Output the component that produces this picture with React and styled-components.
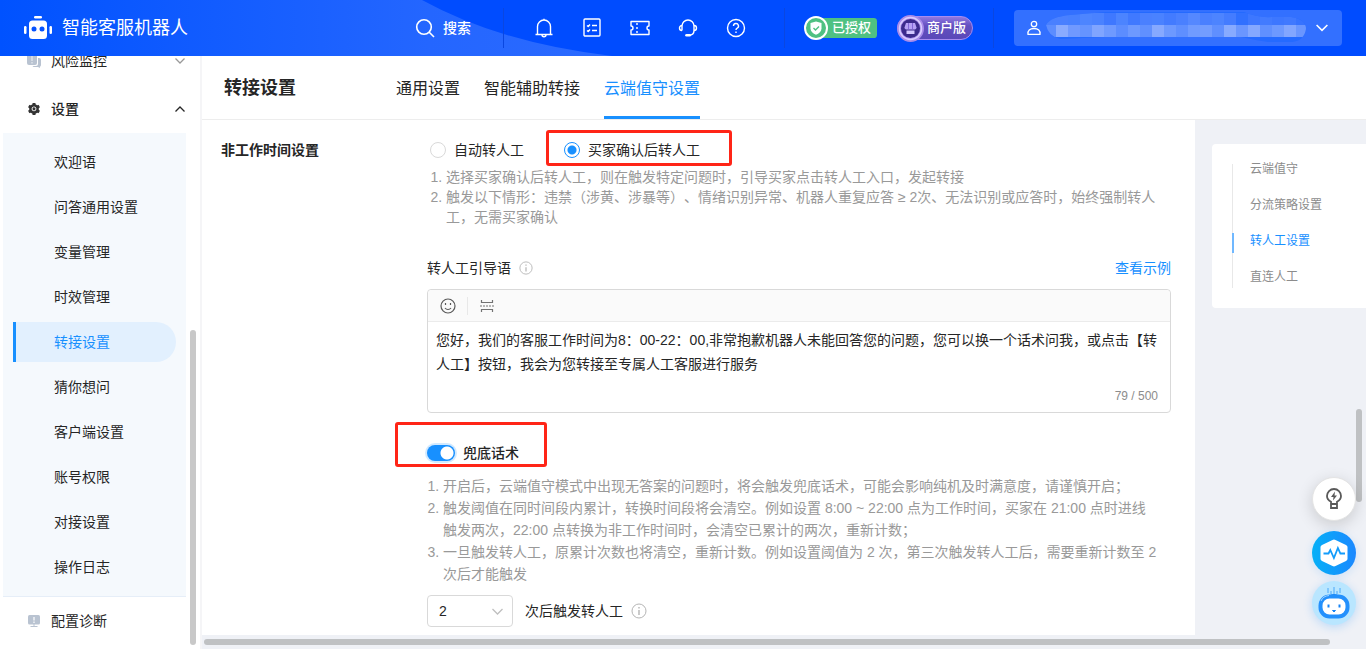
import React, { useState } from 'react';
import styled, { createGlobalStyle, css } from 'styled-components';
import { AiFillSetting } from 'react-icons/ai';

const GlobalStyle = createGlobalStyle`
  * { box-sizing: border-box; }
  body {
    margin: 0;
    font-family: "Liberation Sans", "Noto Sans CJK SC", sans-serif;
    font-size: 14px;
    line-height: 20px;
    color: #262626;
    text-spacing-trim: space-all;
  }
  button, input, select, textarea { font: inherit; color: inherit; }
`;

const Page = styled.div`
  display: flex;
  flex-direction: column;
  height: 100vh;
  overflow: hidden;
  background: #fff;
`;

/* ---------- header ---------- */

const Header = styled.header`
  position: relative;
  flex: none;
  display: flex;
  align-items: center;
  height: 56px;
  padding: 0 24px;
  background: #004cff;
  color: #fff;
`;

const HeaderWave = styled.svg`
  position: absolute;
  left: 0;
  top: 0;
  width: 620px;
  height: 56px;
`;

const Brand = styled.a`
  position: relative;
  flex: none;
  display: flex;
  align-items: center;
  gap: 10px;
  width: 391px;
  color: #fff;
  font-size: 18px;
  text-decoration: none;
`;

const SearchButton = styled.button`
  position: relative;
  flex: none;
  display: flex;
  align-items: center;
  gap: 8px;
  width: 88px;
  height: 40px;
  padding: 0;
  border: 0;
  background: none;
  font-weight: 500;
`;

const HeaderGroup = styled.div`
  position: relative;
  flex: none;
  display: flex;
  align-items: center;
  gap: ${(p) => p.$gap}px;
  height: 40px;
  padding: ${(p) => p.$pad};
  border-left: 1px solid #0a47e0;
`;

const IconButton = styled.button`
  display: grid;
  place-items: center;
  width: 24px;
  height: 24px;
  padding: 0;
  border: 0;
  background: none;
`;

const AuthBadge = styled.span`
  flex: none;
  display: flex;
  align-items: center;
  height: 20px;
  width: 72px;
  gap: 4px;
  border-radius: 12px 4px 4px 12px;
  background: #4fc182;
  font-weight: 500;
  font-size: 13px;
  white-space: nowrap;
`;

const PlanBadge = styled(AuthBadge)`
  width: 76px;
  height: 24px;
  gap: 3px;
  border: 1px solid #a78cf0;
  border-radius: 12px;
  background: linear-gradient(#8f78e0, #6450c0 40%, #5a48b8);
`;

const BadgeIcon = styled.svg`
  flex: none;
  margin-left: -1px;
`;

const UserMenu = styled.button`
  position: relative;
  display: flex;
  align-items: center;
  justify-content: space-between;
  width: 328px;
  height: 36px;
  margin-left: auto;
  padding: 0 14px 0 12px;
  border: 0;
  border-radius: 4px;
  background: #3370ff;
`;

const UserName = styled.span`
  display: flex;
  align-items: center;
  gap: 4px;
`;

/* ---------- sidebar ---------- */

const Body = styled.div`
  flex: 1;
  display: flex;
  min-height: 0;
`;

const Sidebar = styled.nav`
  position: relative;
  flex: none;
  display: flex;
  flex-direction: column;
  justify-content: flex-end;
  width: 200px;
  padding: 0 14px 4px 3px;
  overflow: hidden;
`;

const GroupButton = styled.button`
  flex: none;
  display: flex;
  align-items: center;
  gap: 10px;
  height: 48px;
  padding: 0 1px 0 24px;
  border: 0;
  background: none;
  font-weight: ${(p) => (p.$open ? 500 : 400)};
  text-align: left;
`;

const GroupName = styled.span`
  flex: 1;
`;

const SubMenu = styled.div`
  flex: none;
  display: flex;
  flex-direction: column;
  gap: 5px;
  padding: 9px 10px;
  border-bottom: 1px solid #e6eef8;
  background: #f5f9fd;
`;

const SubLink = styled.a`
  display: block;
  padding: 0 0 0 38px;
  border-left: 3px solid transparent;
  border-radius: 0 20px 20px 0;
  line-height: 40px;
  color: #262626;
  text-decoration: none;
  ${(p) =>
    p.$active &&
    css`
      border-left-color: #1890ff;
      background: #e2f0fe;
      color: #1890ff;
    `}
`;

const ScrollThumb = styled.span`
  position: absolute;
  border-radius: 3px;
  background: #bfc1c3;
`;

const SidebarThumb = styled(ScrollThumb)`
  right: 4px;
  bottom: 4px;
  width: 6px;
  height: 315px;
  background: #c8c8c8;
`;

/* ---------- main ---------- */

const Main = styled.main`
  position: relative;
  flex: 1;
  display: flex;
  flex-direction: column;
  min-width: 0;
  border-left: 2px solid #f5f5f7;
`;

const TitleBar = styled.div`
  flex: none;
  display: flex;
  height: 64px;
  padding-left: 22px;
  border-bottom: 1px solid #ededed;
`;

const Title = styled.h1`
  width: 172px;
  margin: 0;
  font-size: 18px;
  line-height: 64px;
`;

const Tabs = styled.div`
  display: flex;
  gap: 24px;
`;

const Tab = styled.button`
  padding: 6px 0 0;
  border: 0;
  border-bottom: 3px solid ${(p) => (p.$active ? '#1890ff' : 'transparent')};
  background: none;
  color: ${(p) => (p.$active ? '#1890ff' : '#262626')};
  font-size: 16px;
  line-height: 54px;
`;

const Content = styled.div`
  flex: 1;
  display: flex;
  min-height: 0;
  padding-bottom: 14px;
  background: #eff1f6;
`;

const Panel = styled.section`
  flex: 1;
  display: flex;
  min-width: 0;
  padding: 20px 24px 8px 19px;
  background: #fff;
`;

const SectionTitle = styled.h2`
  flex: none;
  width: 206px;
  margin: 0;
  font-size: 14px;
  line-height: 20px;
`;

const Form = styled.div`
  flex: 1;
  min-width: 0;
`;

const RadioRow = styled.div`
  display: flex;
  gap: 40px;
  padding-left: 3px;
`;

const RadioLabel = styled.label`
  position: relative;
  display: flex;
  align-items: center;
  gap: 8px;
`;

const Radio = styled.input`
  appearance: none;
  width: 16px;
  height: 16px;
  margin: 0;
  border: 1px solid #d9d9d9;
  border-radius: 50%;
  &:checked {
    border-color: #1890ff;
    background: radial-gradient(circle, #1890ff 4px, #fff 5px);
  }
`;

const Highlight = styled.span`
  position: absolute;
  inset: ${(p) => p.$inset};
  border: 3px solid #ff2517;
  border-radius: 3px;
  pointer-events: none;
`;

const Notes = styled.ol`
  margin: ${(p) => (p.$loose ? '12px 0 10px' : '7px 0 31px')};
  padding: ${(p) => (p.$loose ? '0 13px 0 16px' : '0 13px 0 19px')};
  line-height: ${(p) => (p.$loose ? 22 : 20)}px;
  color: #999;
`;

const FieldHead = styled.div`
  display: flex;
  align-items: center;
  gap: 8px;
  margin-bottom: 11px;
`;

const ExampleLink = styled.a`
  margin-left: auto;
  color: #1890ff;
  text-decoration: none;
`;

const Editor = styled.div`
  border: 1px solid #d9d9d9;
  border-radius: 4px;
`;

const EditorTools = styled.div`
  display: flex;
  align-items: center;
  height: 32px;
  padding: 0 8px;
  gap: 7px;
  border-bottom: 1px solid #ebebeb;
  border-radius: 4px 4px 0 0;
  background: #fafafa;
`;

const ToolDivider = styled.span`
  width: 1px;
  height: 18px;
  background: #e8e8e8;
`;

const EditorText = styled.textarea`
  display: block;
  width: 100%;
  height: 60px;
  padding: 6px 8px 0;
  border: 0;
  outline: 0;
  resize: none;
  overflow: hidden;
  background: none;
  line-height: 24px;
`;

const Counter = styled.div`
  padding: 4px 12px 6px;
  color: #8c8c8c;
  font-size: 12px;
  text-align: right;
`;

const SwitchRow = styled.label`
  position: relative;
  display: flex;
  align-items: center;
  gap: 8px;
  width: fit-content;
  margin-top: 30px;
  font-weight: 500;
`;

const Switch = styled.input`
  appearance: none;
  width: 28px;
  height: 16px;
  margin: 0;
  border-radius: 8px;
  background: radial-gradient(circle at 20px 8px, #fff 6px, transparent 7px) #1890ff;
  box-shadow: 0 0 0 2px #d1e9ff;
  &:not(:checked) {
    background: radial-gradient(circle at 8px 8px, #fff 6px, transparent 7px) #bfbfbf;
    box-shadow: none;
  }
`;

const ThresholdRow = styled.div`
  display: flex;
  align-items: center;
  gap: 8px;
`;

const SelectBox = styled.span`
  position: relative;
  width: 86px;
  margin-right: 4px;
`;

const Select = styled.select`
  appearance: none;
  display: block;
  width: 100%;
  height: 32px;
  padding: 0 11px;
  border: 1px solid #d9d9d9;
  border-radius: 4px;
  background: #fff;
`;

const SelectArrow = styled.svg`
  position: absolute;
  right: 10px;
  top: 11px;
  pointer-events: none;
`;

const Aside = styled.aside`
  flex: none;
  width: 171px;
  padding: 24px 0 0 17px;
`;

const Anchors = styled.nav`
  padding: 17px 20px 19px;
  border-radius: 4px 0 0 4px;
  background: #fff;
`;

const AnchorList = styled.div`
  display: flex;
  flex-direction: column;
  gap: 16px;
  background: linear-gradient(#e8e8e8, #e8e8e8) 0 3px / 1px calc(100% - 4px) no-repeat;
`;

const AnchorLink = styled.a`
  height: 20px;
  padding-left: 16px;
  border-left: 2px solid ${(p) => (p.$active ? '#70b8ff' : 'transparent')};
  color: ${(p) => (p.$active ? '#1890ff' : '#8c8c8c')};
  font-size: 12px;
  line-height: 16px;
  text-decoration: none;
`;

const HorizontalThumb = styled(ScrollThumb)`
  left: 2px;
  right: 36px;
  bottom: 4px;
  height: 6px;
`;

const VerticalThumb = styled(ScrollThumb)`
  right: 4px;
  bottom: 147px;
  width: 6px;
  height: 93px;
`;

const FloatBar = styled.div`
  position: absolute;
  right: 10px;
  bottom: 24px;
  display: flex;
  flex-direction: column;
  gap: 6px;
`;

const FloatButton = styled.button`
  display: grid;
  place-items: center;
  width: 44px;
  height: 44px;
  padding: 0;
  border: ${(p) => (p.$bordered ? '1px solid #e4e4e4' : '0')};
  border-radius: 50%;
  background: ${(p) => p.$fill};
  box-shadow: ${(p) => p.$shadow};
  margin-bottom: ${(p) => (p.$bordered ? 4 : 0)}px;
`;

/* ---------- icons ---------- */

const Chevron = ({ up, color, size = 10 }) => (
  <svg width={size} height={size} viewBox="0 0 10 10" fill="none" stroke={color} strokeWidth="1.3">
    <path d={up ? 'M.5 7.5 5 3l4.500 4.500' : 'M.5 2.500 5 7l4.500-4.500'} />
  </svg>
);

const InfoIcon = ({ size = 14 }) => (
  <svg width={size} height={size} viewBox="0 0 16 16" fill="none" stroke="#b5b5b5">
    <circle cx="8" cy="8" r="7" />
    <path d="M8 7v5M8 4v1.500" strokeWidth="1.400" />
  </svg>
);

const LogoIcon = () => (
  <svg width="28" height="24" viewBox="0 0 28 24" fill="#fff">
    <rect x="10" y="0" width="8" height="2.500" rx="1.200" />
    <rect x="5" y="4.500" width="18" height="18.500" rx="3.500" />
    <rect x="0" y="10" width="2.500" height="8" rx="1.200" />
    <rect x="25.500" y="10" width="2.500" height="8" rx="1.200" />
    <circle cx="10" cy="13" r="2.500" fill="#0552ff" />
    <circle cx="18" cy="13" r="2.500" fill="#0552ff" />
  </svg>
);

const lineIcon = {
  width: 20,
  height: 20,
  viewBox: '0 0 20 20',
  fill: 'none',
  stroke: '#fff',
  strokeWidth: 1.4,
  strokeLinejoin: 'round',
};

const BellIcon = () => (
  <svg {...lineIcon}>
    <path d="M1.500 16.500h17M3.500 16.500V8.500a6.500 6.500 0 0 1 13 0v8M10 2V.8M8 16.800a2 2 0 0 0 4 0" />
  </svg>
);
const TaskIcon = () => (
  <svg {...lineIcon}>
    <rect x="2" y="1" width="16" height="17" rx="1" />
    <path d="m5 7.500 1.200 1L8 6.500M10 7.500h5M5 12.500l1.200 1L8 11.500M10 12.500h5" />
  </svg>
);
const TicketIcon = () => (
  <svg {...lineIcon}>
    <path d="M1 3.500h18v4.500a2 2 0 0 0 0 4v4.500H1V12a2 2 0 0 0 0-4z" />
    <path d="M7 5v11" strokeDasharray="2 2" />
  </svg>
);
const HeadsetIcon = () => (
  <svg {...lineIcon}>
    <path d="M4 12.500V8a6 6 0 0 1 12 0v4.500c0 3-1.500 4.700-5 4.700" />
    <path d="M4 7.500a2.500 2.500 0 0 0 0 5M16 7.500a2.500 2.500 0 0 1 0 5" />
    <path d="M8.500 17.200h3.200" strokeWidth="2.600" strokeLinecap="round" />
  </svg>
);
const HelpIcon = () => (
  <svg {...lineIcon}>
    <circle cx="10" cy="10" r="8.500" />
    <path d="M7.500 8a2.500 2.500 0 1 1 3.700 2.200c-.8.400-1.200.9-1.200 1.900M10 13.500V15" />
  </svg>
);

const RiskIcon = () => (
  <svg width="14" height="14" viewBox="0 0 14 14" fill="#b9c3d1">
    <rect x="0" y="0" width="10" height="11" rx="2" />
    <path d="M11 4h1a2 2 0 0 1 2 2v5a2 2 0 0 1-1 1.700V14l-2-1H7a2 2 0 0 1-1.500-1H9a2 2 0 0 0 2-2z" />
    <path d="M5 2v5M5 8v1.500" stroke="#eef1f5" />
  </svg>
);
const DiagnoseIcon = () => (
  <svg width="14" height="14" viewBox="0 0 14 14">
    <rect x="1" y="1" width="12" height="9.500" rx="1.500" fill="#b9c3d1" />
    <path d="M7 10v2.500M3.500 12.500h7" stroke="#b9c3d1" />
    <path d="M7 3v3.500M7 7.500V9" stroke="#fff" strokeWidth="1.200" />
  </svg>
);

/* ---------- data ---------- */

const SETTINGS = ['欢迎语', '问答通用设置', '变量管理', '时效管理', '转接设置', '猜你想问', '客户端设置', '账号权限', '对接设置', '操作日志'];
const TABS = ['通用设置', '智能辅助转接', '云端值守设置'];
const ANCHORS = ['云端值守', '分流策略设置', '转人工设置', '直连人工'];
const QUICK_ICONS = [
  ['通知', BellIcon],
  ['任务', TaskIcon],
  ['卡券', TicketIcon],
  ['客服', HeadsetIcon],
  ['帮助', HelpIcon],
];
const MASK_TOP = ['#4a80ff', '#4a80ff', '#4780ff', '#4d85ff', '#4a82ff', '#3f78ff', '#4c84ff', '#4079ff', '#4a80ff', '#4a82ff', '#437bff', '#4a80ff', '#5588ff', '#4a80ff', '#4d84ff', '#447cff', '#3070ff', '#3d77ff', '#427bff', '#3d77ff', '#4079ff', '#3773ff'];
const MASK_BOTTOM = ['#5c8dff', '#8aabff', '#7099ff', '#6594ff', '#80a5ff', '#6f9aff', '#5c8dff', '#6d99ff', '#6090ff', '#86a9ff', '#6d99ff', '#5f8fff', '#709bff', '#739dff', '#5f8fff', '#87aaff', '#6a96ff', '#84a8ff', '#6090ff', '#6d99ff', '#82a6ff', '#6a96ff'];

const GUIDE =
  '您好，我们的客服工作时间为8：00-22：00,非常抱歉机器人未能回答您的问题，您可以换一个话术问我，或点击【转人工】按钮，我会为您转接至专属人工客服进行服务';

export default function App() {
  const [mode, setMode] = useState('confirm');
  const [fallback, setFallback] = useState(true);
  const [guide, setGuide] = useState(GUIDE);
  const [tab, setTab] = useState(TABS[2]);

  return (
    <Page>
      <GlobalStyle />
      <Header>
        <HeaderWave viewBox="0 0 620 56" aria-hidden="true">
          <defs>
            <linearGradient id="wave">
              <stop offset="0" stopColor="#0052ff" />
              <stop offset=".7" stopColor="#2466ff" />
              <stop offset="1" stopColor="#2b6aff" />
            </linearGradient>
          </defs>
          <path d="M0 0h422q78 43 190 56H0z" fill="url(#wave)" />
        </HeaderWave>
        <Brand href="#home">
          <LogoIcon />
          智能客服机器人
        </Brand>
        <SearchButton type="button">
          <svg width="20" height="20" viewBox="0 0 20 20" fill="none" stroke="#fff" strokeWidth="1.600">
            <circle cx="9" cy="9" r="7.300" />
            <path d="m14 14 5 5" />
          </svg>
          搜索
        </SearchButton>
        <HeaderGroup $gap={24} $pad="0 36px 0 28px">
          {QUICK_ICONS.map(([name, Icon]) => (
            <IconButton key={name} type="button" aria-label={name}>
              <Icon />
            </IconButton>
          ))}
        </HeaderGroup>
        <HeaderGroup $gap={20} $pad="0 20px">
          <AuthBadge>
            <BadgeIcon width="24" height="24" viewBox="0 0 24 24">
              <circle cx="12" cy="12" r="11" fill="#4fc182" stroke="#fff" strokeWidth="2" />
              <path d="M12 5.500 17.500 7v5.500c0 3-2.500 5-5.500 6.300-3-1.300-5.500-3.300-5.500-6.300V7z" fill="#fff" />
              <path d="m9.500 12 2 2 3.500-3.500" fill="none" stroke="#4fc182" strokeWidth="1.400" />
            </BadgeIcon>
            已授权
          </AuthBadge>
          <PlanBadge>
            <BadgeIcon width="27" height="27" viewBox="0 0 27 27">
              <circle cx="13.500" cy="13.500" r="11.500" fill="#3c2a8c" stroke="#a88cea" strokeWidth="4" />
              <circle cx="13.500" cy="13.500" r="11" fill="none" stroke="#d9ccff" strokeWidth="1.500" />
              <path d="M9 8h9l1.500 4.500a2 2 0 0 1-1.500 2H9a2 2 0 0 1-1.500-2z" fill="#b6a0f5" />
              <path d="M9.500 15.500h8v3.500h-8z" fill="#d3c6ff" />
              <path d="M11.500 8v6M15.500 8v6" stroke="#8468d8" />
            </BadgeIcon>
            商户版
          </PlanBadge>
        </HeaderGroup>
        <HeaderGroup $gap={0} $pad="0" />
        <UserMenu type="button" aria-label="账号">
          <UserName>
            <svg width="16" height="16" viewBox="0 0 16 16" fill="none" stroke="#fff" strokeWidth="1.300">
              <circle cx="8" cy="4" r="2.700" />
              <path d="M2 14.300c-.5-3.600 1.800-5.800 6-5.800s6.500 2.200 6 5.800z" />
            </svg>
            <svg width="260" height="32" viewBox="0 0 260 32" aria-hidden="true">
              <defs>
                <clipPath id="brush">
                  <path d="M0 13Q4 5 24 3L60 0H198Q212 6 226 5H245Q260 7 260 17 258 29 246 30H222Q208 28 195 25H60L14 27Q2 24 0 13z" />
                </clipPath>
              </defs>
              <g clipPath="url(#brush)">
                <rect width="260" height="32" fill="#246aff" />
                {MASK_TOP.map((c, i) => (
                  <rect key={i} x={i * 12 - 2} y="1" width="12" height="12" fill={c} />
                ))}
                {MASK_BOTTOM.map((c, i) => (
                  <rect key={i} x={i * 12 - 2} y="13" width="12" height="12" fill={c} />
                ))}
              </g>
            </svg>
          </UserName>
          <Chevron color="#fff" size={12} />
        </UserMenu>
      </Header>

      <Body>
        <Sidebar>
          <GroupButton type="button">
            <RiskIcon />
            <GroupName>风险监控</GroupName>
            <Chevron color="#999" />
          </GroupButton>
          <GroupButton type="button" $open>
            <AiFillSetting size={14} color="#333" />
            <GroupName>设置</GroupName>
            <Chevron color="#262626" up />
          </GroupButton>
          <SubMenu>
            {SETTINGS.map((name) => (
              <SubLink key={name} href="#settings" $active={name === '转接设置'}>
                {name}
              </SubLink>
            ))}
          </SubMenu>
          <GroupButton type="button">
            <DiagnoseIcon />
            <GroupName>配置诊断</GroupName>
          </GroupButton>
          <SidebarThumb />
        </Sidebar>

        <Main>
          <TitleBar>
            <Title>转接设置</Title>
            <Tabs role="tablist">
              {TABS.map((name) => (
                <Tab key={name} type="button" role="tab" aria-selected={tab === name} $active={tab === name} onClick={() => setTab(name)}>
                  {name}
                </Tab>
              ))}
            </Tabs>
          </TitleBar>
          <Content>
            <Panel>
              <SectionTitle>非工作时间设置</SectionTitle>
              <Form>
                <RadioRow>
                  <RadioLabel>
                    <Radio type="radio" name="mode" checked={mode === 'auto'} onChange={() => setMode('auto')} />
                    自动转人工
                  </RadioLabel>
                  <RadioLabel>
                    <Radio type="radio" name="mode" checked={mode === 'confirm'} onChange={() => setMode('confirm')} />
                    买家确认后转人工
                    <Highlight $inset="-10px -32px -6px -18px" />
                  </RadioLabel>
                </RadioRow>
                <Notes>
                  <li>选择买家确认后转人工，则在触发特定问题时，引导买家点击转人工入口，发起转接</li>
                  <li>触发以下情形：违禁（涉黄、涉暴等）、情绪识别异常、机器人重复应答 ≥ 2次、无法识别或应答时，始终强制转人工，无需买家确认</li>
                </Notes>
                <FieldHead>
                  <label htmlFor="guide">转人工引导语</label>
                  <InfoIcon />
                  <ExampleLink href="#example">查看示例</ExampleLink>
                </FieldHead>
                <Editor>
                  <EditorTools>
                    <IconButton type="button" aria-label="表情">
                      <svg width="16" height="16" viewBox="0 0 16 16" fill="none" stroke="#595959" strokeWidth="1.200">
                        <circle cx="8" cy="8" r="7" />
                        <path d="M5.500 5v2M10.500 5v2M5 10c1.500 2 4.500 2 6 0" />
                      </svg>
                    </IconButton>
                    <ToolDivider />
                    <IconButton type="button" aria-label="分段">
                      <svg width="14" height="14" viewBox="0 0 14 14" fill="none" stroke="#737373" strokeWidth="1.200">
                        <path d="M1.500 1v2.500h11V1M1.500 13v-2.500h11V13" />
                        <path d="M0 7h14" strokeDasharray="2 1" />
                      </svg>
                    </IconButton>
                  </EditorTools>
                  <EditorText id="guide" spellCheck={false} value={guide} onChange={(e) => setGuide(e.target.value)} />
                  <Counter>79 / 500</Counter>
                </Editor>
                <SwitchRow>
                  <Switch type="checkbox" role="switch" checked={fallback} onChange={() => setFallback(!fallback)} />
                  兜底话术
                  <Highlight $inset="-21px -28px -4px -32px" />
                </SwitchRow>
                <Notes $loose>
                  <li>开启后，云端值守模式中出现无答案的问题时，将会触发兜底话术，可能会影响纯机及时满意度，请谨慎开启；</li>
                  <li>触发阈值在同时间段内累计，转换时间段将会清空。例如设置 8:00 ~ 22:00 点为工作时间，买家在 21:00 点时进线触发两次，22:00 点转换为非工作时间时，会清空已累计的两次，重新计数；</li>
                  <li>一旦触发转人工，原累计次数也将清空，重新计数。例如设置阈值为 2 次，第三次触发转人工后，需要重新计数至 2 次后才能触发</li>
                </Notes>
                <ThresholdRow>
                  <SelectBox>
                    <Select id="threshold" defaultValue="2">
                      <option>1</option>
                      <option>2</option>
                      <option>3</option>
                    </Select>
                    <SelectArrow width="11" height="11" viewBox="0 0 11 11" fill="none" stroke="#bfbfbf" strokeWidth="1.300">
                      <path d="M.5 3 5.500 8l5-5" />
                    </SelectArrow>
                  </SelectBox>
                  <label htmlFor="threshold">次后触发转人工</label>
                  <InfoIcon size={16} />
                </ThresholdRow>
              </Form>
            </Panel>
            <Aside>
              <Anchors>
                <AnchorList>
                  {ANCHORS.map((name) => (
                    <AnchorLink key={name} href="#section" $active={name === '转人工设置'}>
                      {name}
                    </AnchorLink>
                  ))}
                </AnchorList>
              </Anchors>
            </Aside>
          </Content>
          <HorizontalThumb />
          <VerticalThumb />
          <FloatBar>
            <FloatButton type="button" aria-label="建议" $bordered $fill="#fff" $shadow="0 4px 16px rgba(0, 0, 0, .16)">
              <svg width="18" height="22" viewBox="0 0 18 22" fill="none" stroke="#595959" strokeWidth="1.800">
                <path d="M6 16v-2.200C3.500 12.500 2 10.500 2 8a7 7 0 0 1 14 0c0 2.500-1.500 4.500-4 5.800V16zM6 16v4h6v-4" />
                <path d="M10 3.500 6 9h2.500L8 12.500 12 7.500H9.500z" fill="#595959" stroke="none" />
              </svg>
            </FloatButton>
            <FloatButton type="button" aria-label="诊断" $fill="linear-gradient(90deg, #05b0f7, #1b88ff)" $shadow="0 2px 10px rgba(24, 144, 255, .16)">
              <svg width="28" height="28" viewBox="0 0 28 28">
                <path d="M12.500 1q1.500-.8 3 0l10.500 5q1.500.8 1.500 2v12q0 1.200-1.500 2l-10.500 5q-1.500.8-3 0L2 22q-1.500-.8-1.500-2V8Q.5 6.800 2 6z" fill="#fff" />
                <path d="M3.500 14.500h5l1.800-3.500 3.600 8 4-10 2.500 5.500h4.600" fill="none" stroke="#129cfb" strokeWidth="1.800" />
              </svg>
            </FloatButton>
            <FloatButton type="button" aria-label="机器人助手" $fill="#b9e6ff" $shadow="0 2px 10px rgba(24, 144, 255, .24)">
              <svg width="32" height="32" viewBox="0 0 32 32" fill="none">
                <path d="M10 1v5M13 4v3M16 0v7M19 4v3M22 1v5" stroke="#4aa8fa" />
                <path d="M12 9q0-2 4-2t4 2z" fill="#1683f5" />
                <rect x="2.500" y="9.500" width="27" height="20" rx="9" fill="#fff" stroke="#2390fc" strokeWidth="4" />
                <path d="M3 14q2-5 8-5.500" stroke="#9fd4ff" />
                <path d="M10.500 17.500v3M21.500 17.500v3" stroke="#1683f5" strokeWidth="2" />
                <path d="M14.500 23.500h3L16 25z" fill="#1683f5" stroke="#1683f5" />
              </svg>
            </FloatButton>
          </FloatBar>
        </Main>
      </Body>
    </Page>
  );
}
